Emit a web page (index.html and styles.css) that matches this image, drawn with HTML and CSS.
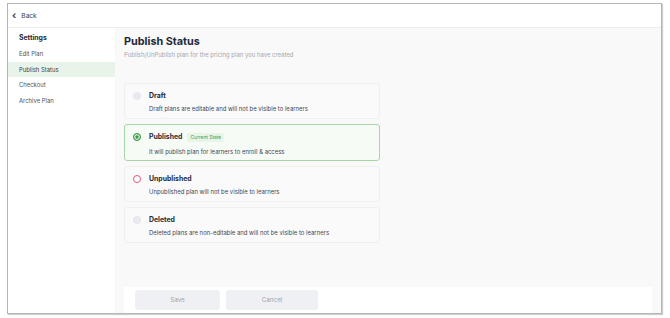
FILE: index.html
```html
<!DOCTYPE html>
<html>
<head>
<meta charset="utf-8">
<link rel="stylesheet" href="styles.css">
</head>
<body>
<div class="frame">
  <header class="topbar">
    <span class="back-arrow">&#8249;</span>
    <span class="back-text">Back</span>
  </header>
  <div class="layout">
    <aside class="sidebar">
      <div class="side-title">Settings</div>
      <div class="side-item">Edit Plan</div>
      <div class="side-item active">Publish Status</div>
      <div class="side-item">Checkout</div>
      <div class="side-item">Archive Plan</div>
    </aside>
    <main class="main">
      <div class="content">
        <h1 class="title">Publish Status</h1>
        <p class="subtitle">Publish/UnPublish plan for the pricing plan you have created</p>
        <div class="options">
          <div class="option">
            <span class="radio radio-disabled"></span>
            <div class="opt-body">
              <div class="opt-title">Draft</div>
              <div class="opt-desc">Draft plans are editable and will not be visible to learners</div>
            </div>
          </div>
          <div class="option option-selected">
            <span class="radio radio-checked"></span>
            <div class="opt-body">
              <div class="opt-title">Published <span class="badge">Current State</span></div>
              <div class="opt-desc">It will publish plan for learners to enroll &amp; access</div>
            </div>
          </div>
          <div class="option">
            <span class="radio radio-red"></span>
            <div class="opt-body">
              <div class="opt-title">Unpublished</div>
              <div class="opt-desc">Unpublished plan will not be visible to learners</div>
            </div>
          </div>
          <div class="option">
            <span class="radio radio-disabled"></span>
            <div class="opt-body">
              <div class="opt-title">Deleted</div>
              <div class="opt-desc">Deleted plans are non-editable and will not be visible to learners</div>
            </div>
          </div>
        </div>
      </div>
      <div class="footer">
        <button class="btn btn-save">Save</button>
        <button class="btn btn-cancel">Cancel</button>
      </div>
    </main>
  </div>
</div>
</body>
</html>
```

FILE: styles.css
```css
* { box-sizing: border-box; }
html, body { margin: 0; padding: 0; }
body {
  background: #ffffff;
  font-family: Inter, "Noto Sans", sans-serif;
  color: #1f2937;
  width: 670px;
  height: 318px;
  overflow: hidden;
}
.frame {
  margin: 3px 8px 0 7px;
  height: 311px;
  border: 1px solid #b5b5b5;
  box-shadow: 1px 1px 1px #cfcfcf;
  display: flex;
  flex-direction: column;
  background: #fff;
}
.topbar {
  height: 24px;
  flex: none;
  display: flex;
  align-items: center;
  padding-left: 4px;
  border-bottom: 1px solid #ececec;
  font-size: 6.6px;
  color: #374151;
}
.back-arrow {
  font-size: 10px;
  font-weight: 700;
  margin-right: 5px;
  line-height: 1;
  position: relative;
  top: -1px;
}
.layout {
  flex: 1;
  display: flex;
  min-height: 0;
}
.sidebar {
  width: 107px;
  flex: none;
  background: #fff;
  padding-top: 2px;
}
.side-title {
  font-size: 6.9px;
  font-weight: 700;
  color: #1f2937;
  padding-left: 11px;
  height: 16px;
  line-height: 16px;
}
.side-item {
  font-size: 5.9px;
  color: #4b5563;
  padding-left: 11px;
  height: 15.7px;
  line-height: 15.7px;
}
.side-item.active {
  background: #e8f4e9;
  color: #374151;
}
.main {
  flex: 1;
  background: #f9f9f9;
  display: flex;
  flex-direction: column;
  padding: 0 9px 0 9px;
}
.content { flex: 1; }
.title {
  margin: 6px 0 0 0;
  font-size: 10.8px;
  font-weight: 700;
  line-height: 16px;
  color: #1f2937;
}
.subtitle {
  margin: 0;
  font-size: 5.95px;
  line-height: 9px;
  color: #a3a7ae;
}
.options {
  margin-top: 24px;
  width: 256px;
  display: flex;
  flex-direction: column;
  gap: 5px;
}
.option {
  height: 36px;
  border: 1px solid #f0f0f0;
  border-radius: 3px;
  background: #fafafa;
  display: flex;
  align-items: flex-start;
  padding: 7px 0 0 8px;
}
.option-selected {
  border-color: #a6d7a6;
  background: #f6fbf5;
  height: 37px;
}
.radio {
  width: 8px;
  height: 8px;
  border-radius: 50%;
  flex: none;
  margin-top: 1px;
  margin-right: 8px;
}
.radio-disabled {
  background: #e9ebf0;
  border: 1px solid #e4e6ec;
}
.radio-checked {
  background: #3c9a4c;
  border: 1px solid #3c9a4c;
  box-shadow: inset 0 0 0 1.3px #dff0df;
}
.radio-red {
  background: #fff;
  border: 1.3px solid #df5c78;
}
.opt-body { display: flex; flex-direction: column; }
.opt-title {
  font-size: 6.9px;
  font-weight: 700;
  line-height: 10px;
  color: #1f2937;
  display: flex;
  align-items: center;
}
.badge {
  margin-left: 5px;
  font-size: 4.9px;
  font-weight: 400;
  color: #4a9e56;
  background: #e7f4e7;
  padding: 1px 3px;
  line-height: 7px;
  border-radius: 2px;
}
.opt-desc {
  margin-top: 3px;
  font-size: 5.95px;
  line-height: 9px;
  color: #3f4652;
}
.option-selected .opt-desc { margin-top: 5px; }
.footer {
  height: 26px;
  flex: none;
  background: #fff;
  display: flex;
  align-items: center;
  gap: 6px;
  padding-left: 11px;
}
.btn {
  height: 20px;
  border: none;
  border-radius: 3px;
  background: #eef0f4;
  color: #a0a5ae;
  font-family: Inter, "Noto Sans", sans-serif;
  font-size: 6.3px;
  padding: 0;
}
.btn-save { width: 85px; }
.btn-cancel { width: 92px; }
```
